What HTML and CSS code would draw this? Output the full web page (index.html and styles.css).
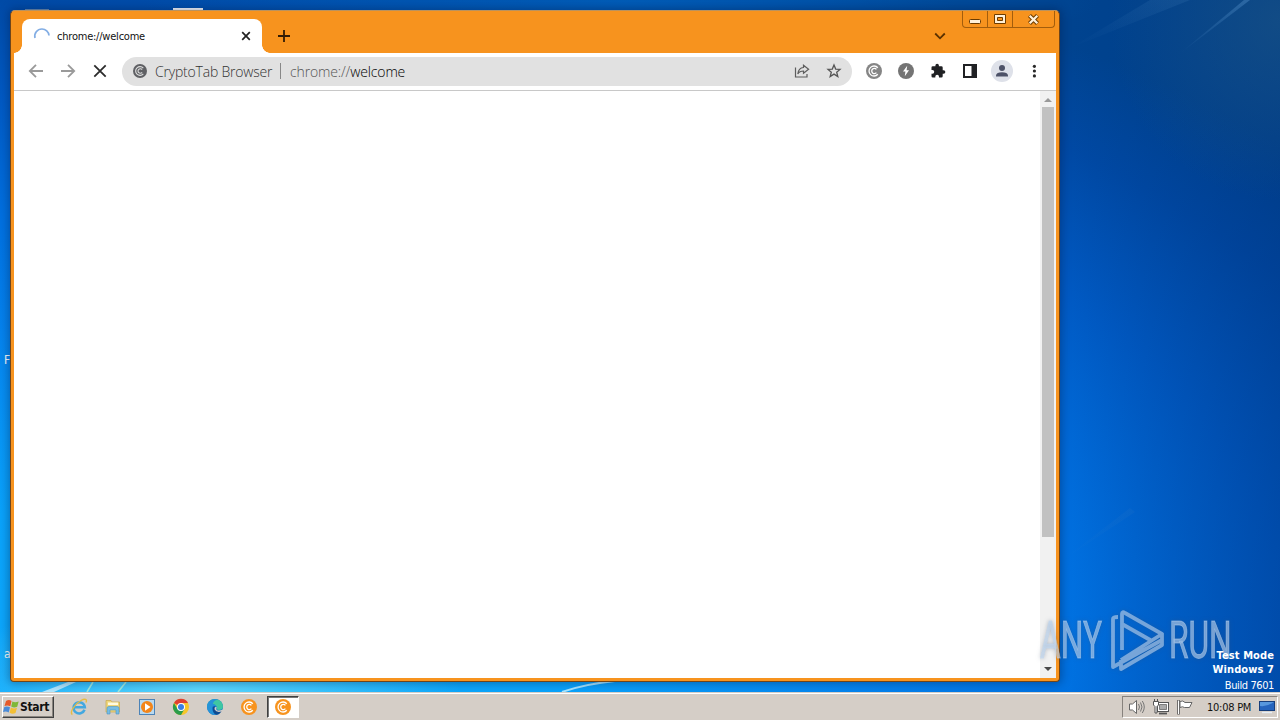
FILE: index.html
```
<!DOCTYPE html>
<html lang="en">
<head>
    <meta charset="UTF-8">
    <meta name="viewport" content="width=device-width, initial-scale=1.0">
    <title>chrome://welcome</title>
    <link rel="stylesheet" href="styles.css">
</head>
<body>

    <!-- shared coin logo -->
    <svg width="0" height="0" class="defs">
        <symbol id="coin" viewBox="0 0 16 16">
            <circle cx="8" cy="8" r="8" fill="currentColor"/>
            <path d="M11.8 4.7A5 5 0 1 0 11.8 11.3M10.4 6.4A2.6 2.6 0 1 0 10.4 9.6" fill="none" stroke="var(--coin-line, #fff)" stroke-width="1.3"/>
        </symbol>
    </svg>

    <main class="desktop">
        <svg class="wallpaper" width="1280" height="692" viewBox="0 0 1280 692">
            <defs>
                <linearGradient id="beam" x1="0" y1="1" x2="1" y2="0">
                    <stop offset="0" stop-color="#4a86c0" stop-opacity="0"/>
                    <stop offset="1" stop-color="#4a86c0" stop-opacity=".5"/>
                </linearGradient>
            </defs>
            <path d="M1178 55L1244 0H1250Z" fill="url(#beam)"/>
            <path d="M1070 48L1150 0H1190Z" fill="url(#beam)" opacity=".35"/>
            <path d="M1060 562L1130 508L1135 512Z" fill="url(#beam)" opacity=".2"/>
            <path d="M42 692L68 682H76L54 692Z" fill="#d5f4ff" opacity=".8"/>
            <path d="M87 692L93 682M118 692L126 682" stroke="#b9f3d8" stroke-width="1.6" opacity=".8"/>
            <path d="M562 692Q585 684 615 681" fill="none" stroke="#a9e6ff" stroke-width="2"/>
        </svg>

        <span class="icon-top icon-a"></span>
        <span class="icon-top icon-b"></span>
        <span class="icon-label label-f">F</span>
        <span class="icon-label label-a">a</span>

        <section class="window">
            <header class="titlebar">
                <div class="tab">
                    <svg class="spinner" width="18" height="18" viewBox="0 0 18 18"><path d="M2 11A7.2 7.2 0 0 1 9 2A7.2 7.2 0 0 1 16 8.5" fill="none" stroke="#82ade4" stroke-width="1.7"/></svg>
                    <span class="tab-title">chrome://welcome</span>
                    <svg width="10" height="10" viewBox="0 0 10 10"><path d="M1.2 1.2L8.8 8.8M8.8 1.2L1.2 8.8" stroke="#222" stroke-width="1.7"/></svg>
                </div>
                <svg class="new-tab" width="12" height="12" viewBox="0 0 12 12"><path d="M6 0V12M0 6H12" stroke="#321c05" stroke-width="1.8"/></svg>
                <svg class="tab-search" width="12" height="8" viewBox="0 0 12 8"><path d="M1.2 1.5L6 6.3L10.8 1.5" fill="none" stroke="#5a3100" stroke-width="1.8"/></svg>
                <div class="controls">
                    <span class="control"><svg width="12" height="5" viewBox="0 0 12 5"><rect x=".5" y=".5" width="11" height="4" rx="1" fill="#fff0d8" stroke="#6b3b00"/></svg></span>
                    <span class="control"><svg width="12" height="10" viewBox="0 0 12 10"><path d="M.5 .5H11.5V9.5H.5ZM3.5 3.5V6.5H8.5V3.5Z" fill="#fff0d8" fill-rule="evenodd" stroke="#6b3b00"/></svg></span>
                    <span class="control control-close"><svg width="13" height="11" viewBox="0 0 13 11"><path d="M2.5 1.5L10.5 9.5M10.5 1.5L2.5 9.5" stroke="#6b3b00" stroke-width="4.2"/><path d="M2.7 1.7L10.3 9.3M10.3 1.7L2.7 9.3" stroke="#fff0d8" stroke-width="2.3"/></svg></span>
                </div>
            </header>

            <div class="toolbar">
                <nav class="nav">
                    <svg width="16" height="16" viewBox="0 0 16 16"><path d="M15 8H2M8 1.8L1.8 8L8 14.2" fill="none" stroke="#9a9a9a" stroke-width="1.8"/></svg>
                    <svg width="16" height="16" viewBox="0 0 16 16"><path d="M1 8H14M8 1.8L14.2 8L8 14.2" fill="none" stroke="#9a9a9a" stroke-width="1.8"/></svg>
                    <svg width="16" height="16" viewBox="0 0 16 16"><path d="M2.3 2.3L13.7 13.7M13.7 2.3L2.3 13.7" stroke="#2b2b2b" stroke-width="1.8"/></svg>
                </nav>
                <div class="omnibox">
                    <svg class="site-icon" width="14" height="14"><use href="#coin"/></svg>
                    <span class="site-name">CryptoTab Browser</span>
                    <span class="divider"></span>
                    <span class="url"><span class="scheme">chrome://</span>welcome</span>
                    <svg class="share" width="16" height="16" viewBox="0 0 16 16"><path d="M1.5 4.5V14H13V11M9.5 2.2L14.6 6.2L9.5 10.3V8C6.8 8 5 8.8 3.8 11C4.2 7.4 6 4.8 9.5 4.5Z" fill="none" stroke="#5d5d5d" stroke-width="1.2"/></svg>
                    <svg width="16" height="16" viewBox="0 0 16 16"><path d="M8 2L9.7 6.1L14 6.4L10.7 9.2L11.8 13.5L8 11.1L4.2 13.5L5.3 9.2L2 6.4L6.3 6.1Z" fill="none" stroke="#555" stroke-width="1.3"/></svg>
                </div>
                <div class="actions">
                    <svg class="coin-gray" width="16" height="16"><use href="#coin"/></svg>
                    <svg width="16" height="16" viewBox="0 0 16 16"><circle cx="8" cy="8" r="8" fill="#747474"/><path d="M9.2 2.8L5 8.5H7.4L6.8 13.2L11 7.3H8.6Z" fill="#fff"/></svg>
                    <svg width="16" height="16" viewBox="0 0 16 16"><path d="M13.6 7.3H12.7V4.6Q12.7 3.3 11.4 3.3H8.9V2.4A1.75 1.75 0 0 0 5.4 2.4V3.3H2.8Q1.5 3.3 1.5 4.6V7H2.4A1.85 1.85 0 0 1 2.4 10.7H1.5V13.3Q1.5 14.6 2.8 14.6H5.3V13.7A1.85 1.85 0 0 1 9 13.7V14.6H11.4Q12.7 14.6 12.7 13.3V10.8H13.6A1.75 1.75 0 0 0 13.6 7.3Z" fill="#202124"/></svg>
                    <svg width="16" height="16" viewBox="0 0 16 16"><path d="M1 1H15V15H1ZM3 3V13H9.5V3Z" fill="#202124" fill-rule="evenodd"/></svg>
                    <svg class="avatar" width="22" height="22" viewBox="0 0 22 22"><circle cx="11" cy="11" r="11" fill="#dee1e9"/><circle cx="11" cy="8" r="3" fill="#4d5268"/><path d="M5 16.5V15.2Q5.5 12.3 11 12.3T17 15.2V16.5Z" fill="#4d5268"/></svg>
                    <svg width="16" height="16" viewBox="0 0 16 16"><g fill="#292929"><circle cx="8.4" cy="3.3" r="1.6"/><circle cx="8.4" cy="8" r="1.6"/><circle cx="8.4" cy="12.9" r="1.6"/></g></svg>
                </div>
            </div>

            <div class="content">
                <div class="scrollbar">
                    <svg width="16" height="16" viewBox="0 0 16 16"><path d="M4 11L8 7L12 11Z" fill="#999"/></svg>
                    <span class="thumb"></span>
                    <svg class="scroll-down" width="16" height="16" viewBox="0 0 16 16"><path d="M4 5L8 9L12 5Z" fill="#4a4a4a"/></svg>
                </div>
            </div>
        </section>

        <div class="watermark">
            <span class="mark-text">ANY</span>
            <svg width="56" height="62" viewBox="0 0 56 62"><path d="M12 40V4Q12 1 15 3L52 24L11 50M12 14L42 31M3 50V9Q3 7 8 7M3 50V57L52 30M11 50V59L52 35V24" fill="none" stroke="currentColor" stroke-width="3.8" stroke-linejoin="round"/></svg>
            <span class="mark-text">RUN</span>
        </div>

        <div class="build-info">
            <b>Test Mode</b>
            <b>Windows 7</b>
            <span>Build 7601</span>
        </div>
    </main>

    <footer class="taskbar">
        <div class="start">
            <svg width="17" height="16" viewBox="0 0 17 16"><path d="M3 2Q6 0 8.5 2L7.3 7.3Q4.5 5.7 1.5 7Z" fill="#e65a2a"/><path d="M9.4 2.4Q12 4 15.7 2.4L14.2 7.8Q11 9.3 8.2 7.6Z" fill="#7fb83a"/><path d="M1.3 8Q4 6.8 7 8.3L5.7 13.4Q3 12 0 13Z" fill="#4b8bd8"/><path d="M7.9 8.6Q11 10.3 14 8.8L12.5 14Q9.5 15.5 6.6 13.8Z" fill="#f3bf35"/></svg>
            <b>Start</b>
        </div>
        <div class="pinned">
            <!-- Internet Explorer -->
            <svg width="18" height="18" viewBox="0 0 18 18"><path d="M14.5 11.8A5.6 5.6 0 1 1 14.8 9.3H4" fill="none" stroke="#43a8e0" stroke-width="2.6"/><path d="M2.4 16.5C-1 15 4.5 6 11 2.5C15 .3 17.5 1.2 16 4.5" fill="none" stroke="#e5bc42" stroke-width="1.4"/></svg>
            <!-- Explorer -->
            <svg width="18" height="18" viewBox="0 0 18 18"><path d="M2 2.5H7L8 4H15.5V14H2Z" fill="#efd67b" stroke="#c8a94d" stroke-width=".7"/><path d="M4 4.5H14V7H4Z" fill="#fffbe0"/><path d="M3 16V10Q3 8.5 5 8.5H13Q15 8.5 15 10V16H12V12H6V16Z" fill="#76bde4" stroke="#4a94c5" stroke-width=".6"/></svg>
            <!-- Media Player -->
            <svg width="18" height="18" viewBox="0 0 18 18"><rect x="1.5" y="1.5" width="15" height="15" fill="#b9d9ef" stroke="#4c83b7"/><circle cx="9" cy="9" r="6" fill="#f38519"/><path d="M7 5.3L12.5 9L7 12.7Z" fill="#fff"/></svg>
            <!-- Chrome -->
            <svg width="18" height="18" viewBox="0 0 18 18"><circle cx="9" cy="9" r="8" fill="#f7c629"/><path d="M9 9L2 5A8 8 0 0 1 16 5H9Z" fill="#df4030"/><path d="M2 5A8 8 0 0 0 9 17L12.5 11L5.5 11Z" fill="#2b9c4b"/><circle cx="9" cy="9" r="4" fill="#fff"/><circle cx="9" cy="9" r="3" fill="#397fe4"/></svg>
            <!-- Edge -->
            <svg width="18" height="18" viewBox="0 0 18 18"><circle cx="9" cy="9" r="8" fill="#1377c9"/><path d="M1 8.8A8 8 0 0 1 17 9Q16.7 12 13 12Q10 12 11 9.5Q9.5 5.7 5.5 6Q2 6.5 1 8.8Z" fill="#3fc7a2"/><path d="M1 8.8A8 8 0 0 1 12 1.6Q7 3 7 6Q10.5 6.7 10.5 9.5Q8 6.5 6.3 9Q5 12.5 9.5 16.8A8 8 0 0 1 1 8.8Z" fill="#2693d8"/><path d="M10.8 9.2Q9.5 11.5 11.5 12.4Q13.8 13 17 11.5L18 14L16 17L14 15.5Q9 16.5 7.7 11.5Q7.8 8.5 10.8 9.2Z" fill="#d5cec7"/><path d="M7 9Q5.8 15 10.5 16.8Q13.5 16.5 15.6 13.5Q10.5 15 8.6 11.5Q8 9.5 9.5 8Z" fill="#104b91"/></svg>
            <svg class="coin-orange" width="16" height="16"><use href="#coin"/></svg>
        </div>
        <div class="task-active"><svg class="coin-orange" width="16" height="16"><use href="#coin"/></svg></div>

        <div class="tray">
            <svg width="18" height="16" viewBox="0 0 18 16"><path d="M1.5 5H4.5L8.5 1.5V14.5L4.5 11H1.5Z" fill="#fff" stroke="#666"/><path d="M10.5 5Q12.5 8 10.5 11M12.5 3.5Q15.5 8 12.5 12.5M14.3 2Q18.3 8 14.3 14" fill="none" stroke="#777"/></svg>
            <svg width="18" height="16" viewBox="0 0 18 16"><rect x="5.5" y="3.5" width="11" height="9" fill="#fff" stroke="#555"/><path d="M7.5 5.5H14.5V10.5H7.5Z" fill="#aaa" stroke="#666" stroke-width=".8"/><path d="M7 14.5H15" stroke="#555" stroke-width="1.8"/><path d="M1.5 2.5H6.5V6L5 7.5V14H3V7.5L1.5 6ZM2.5 0V3M5.5 0V3" fill="#fff" stroke="#555"/></svg>
            <svg width="18" height="16" viewBox="0 0 18 16"><path d="M2.5 1V15.5" stroke="#555" stroke-width="2.6"/><path d="M2.5 1.5V15" stroke="#fff"/><path d="M4 2.5Q7 1 9 3.5H16L13.5 8.5H8.5Q6.5 7 4 8.5Z" fill="#fff" stroke="#666"/></svg>
            <span class="clock">10:08 PM</span>
            <svg width="16" height="14" viewBox="0 0 16 14"><rect x=".5" y="1.5" width="15" height="9" fill="#2564bd" stroke="#173e7b"/><path d="M1 6Q8 7 15 2V2H1Z" fill="#5797dd"/><path d="M3 12.5H13" stroke="#e6edf4" stroke-width="1.4"/></svg>
        </div>
    </footer>

</body>
</html>
```

FILE: styles.css
```
* {
    box-sizing: border-box;
}
body {
    margin: 0;
    width: 1280px;
    height: 720px;
    overflow: hidden;
    display: flex;
    flex-direction: column;
    font-family: "DejaVu Sans Condensed", "DejaVu Sans", sans-serif;
    font-size: 11px;
    color: #111;
}
svg {
    display: block;
    flex: none;
}
.defs {
    position: absolute;
}

/* Desktop */
.desktop {
    position: relative;
    height: 692px;
    overflow: hidden;
    background:
        radial-gradient(ellipse 260px 100px at 200px 692px, rgba(105, 225, 255, .85), transparent),
        radial-gradient(ellipse 480px 60px at 620px 0, rgba(0, 98, 190, .8), transparent),
        radial-gradient(ellipse 170px 180px at 1280px 20px, rgba(35, 90, 130, .5), transparent),
        linear-gradient(to right, transparent 1070px, rgba(0, 50, 125, .36) 1280px),
        radial-gradient(ellipse 1400px 740px at 240px 640px, #12aefb 0%, #0aa3fb 24%, #0583ee 45%, #0070e0 60%, #005ac4 75%, #0049a4 89%, #00438f 100%);
}
.wallpaper {
    position: absolute;
    inset: 0;
}
.icon-top {
    position: absolute;
    height: 2px;
}
.icon-a {
    left: 25px;
    top: 9px;
    width: 24px;
    background: #6d8eaf;
}
.icon-b {
    left: 173px;
    top: 8px;
    width: 30px;
    background: #fff;
}
.icon-label {
    position: absolute;
    left: 4px;
    color: #fff;
    font-size: 12px;
    line-height: 14px;
}
.label-f { top: 353px; }
.label-a { top: 647px; }

/* Browser window */
.window {
    position: absolute;
    left: 10px;
    top: 10px;
    width: 1050px;
    height: 672px;
    display: flex;
    flex-direction: column;
    padding: 0 3px 3px;
    border: 1px solid #70451a;
    border-top-color: #b9925f;
    border-radius: 5px 5px 4px 4px;
    background: #f7931e;
    box-shadow: 0 0 9px 2px rgba(0, 25, 70, .35);
}
.titlebar {
    height: 42px;
    display: flex;
    align-items: flex-end;
}
.tab {
    position: relative;
    width: 240px;
    height: 34px;
    margin-left: 8px;
    padding: 0 11px;
    display: flex;
    align-items: center;
    background: #fff;
    border-radius: 8px 8px 0 0;
}
/* curved feet of the tab */
.tab::before, .tab::after {
    content: "";
    position: absolute;
    bottom: 0;
    width: 8px;
    height: 8px;
}
.tab::before {
    left: -8px;
    background: radial-gradient(circle at 0 0, transparent 7.5px, #fff 8px);
}
.tab::after {
    right: -8px;
    background: radial-gradient(circle at 100% 0, transparent 7.5px, #fff 8px);
}
.tab-title {
    flex: 1;
    margin-left: 6px;
    font-size: 11px;
    letter-spacing: -.22px;
}
.new-tab {
    margin: 0 0 11px 16px;
}
.tab-search {
    margin: 0 0 13px auto;
}
.controls {
    display: flex;
    align-self: flex-start;
    height: 17px;
    margin: 0 1px 0 16px;
    border: 1px solid #a35d0c;
    border-top: 0;
    border-radius: 0 0 4px 4px;
}
.control {
    width: 25px;
    display: flex;
    align-items: center;
    justify-content: center;
    border-right: 1px solid #a35d0c;
}
.control:first-child svg {
    margin-top: 4px;
}
.control-close {
    width: 41px;
    border: 0;
}

.toolbar {
    height: 38px;
    display: flex;
    align-items: center;
    background: #fff;
    border-bottom: 1px solid #c8c8c8;
}
.nav {
    display: flex;
    gap: 16px;
    margin: -1px 14px 0;
}
.omnibox {
    width: 730px;
    height: 29px;
    padding: 0 10px 1px 11px;
    display: flex;
    align-items: center;
    border-radius: 15px;
    background: #e1e1e1;
    font-family: "Open Sans", sans-serif;
    font-size: 14px;
    font-weight: 300;
}
.site-icon {
    color: #5f6064;
    --coin-line: #ddd;
}
.site-name {
    width: 125px;
    margin-left: 8px;
    padding-top: 1px;
    white-space: nowrap;
    letter-spacing: -.2px;
    color: #333;
}
.divider {
    width: 1px;
    height: 16px;
    background: #888;
}
.url {
    margin-left: 9px;
    padding-top: 1px;
    letter-spacing: -.14px;
    color: #000;
}
.scheme {
    color: #555;
}
.share {
    margin: 0 16px 0 auto;
}
.actions {
    display: flex;
    align-items: center;
    gap: 16px;
    margin: -1px 0 0 14px;
}
.coin-gray {
    color: #858585;
}
.avatar {
    margin: 0 -3px;
}

.content {
    flex: 1;
    display: flex;
    justify-content: flex-end;
    background: #fff;
}
.scrollbar {
    width: 16px;
    display: flex;
    flex-direction: column;
    align-items: center;
    background: #f1f1f1;
}
.thumb {
    width: 12px;
    height: 430px;
    background: #c1c1c1;
}
.scroll-down {
    margin-top: auto;
}

/* Overlay texts */
.build-info {
    position: absolute;
    right: 6px;
    top: 649px;
    display: flex;
    flex-direction: column;
    align-items: flex-end;
    line-height: 14px;
    color: #fff;
}
.build-info b {
    letter-spacing: .1px;
}
.build-info span {
    margin-top: 2px;
    letter-spacing: -.4px;
}
.watermark {
    position: absolute;
    left: 1040px;
    top: 610px;
    display: flex;
    align-items: center;
    color: rgba(190, 214, 240, .6);
    filter: drop-shadow(0 0 2px rgba(60, 80, 110, .5));
}
.mark-text {
    width: 62px;
    font-family: "Roboto", sans-serif;
    font-size: 52px;
    line-height: 62px;
    transform: scaleX(.61);
    transform-origin: left;
    -webkit-text-stroke: 1px rgba(190, 214, 240, .5);
}
.watermark svg {
    margin: 0 3px 0 8px;
}

/* Taskbar */
.taskbar {
    height: 28px;
    padding: 1px 0 0 2px;
    display: flex;
    align-items: center;
    background: #d5cec7;
    border-top: 1px solid #d5cec7;
    box-shadow: inset 0 1px #fff;
}
.start {
    width: 52px;
    height: 22px;
    display: flex;
    align-items: center;
    border: 1px solid;
    border-color: #fff #404040 #404040 #fff;
    box-shadow: inset -1px -1px #8a857f;
    font-size: 12px;
    letter-spacing: -.3px;
}
.pinned {
    display: flex;
    align-items: center;
    gap: 16px;
    margin-left: 16px;
}
.pinned .coin-orange {
    margin-left: 1px;
}
.task-active {
    width: 32px;
    height: 22px;
    margin-left: 10px;
    display: flex;
    align-items: center;
    justify-content: center;
    background: #fff;
    border: 1px solid;
    border-color: #404040 #fff #fff #404040;
    box-shadow: inset 1px 1px #777;
}
.coin-orange {
    color: #f7931e;
}
.tray {
    width: 156px;
    height: 22px;
    margin: 0 2px 0 auto;
    padding: 0 2px 0 5px;
    display: flex;
    align-items: center;
    gap: 6px;
    border: 1px solid;
    border-color: #87827d #fff #fff #87827d;
}
.clock {
    flex: 1;
    margin-left: 7px;
    white-space: nowrap;
    letter-spacing: -.25px;
}
```
